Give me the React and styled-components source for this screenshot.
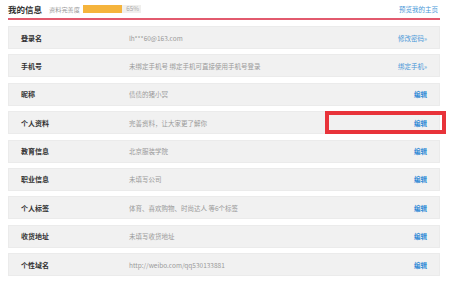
import styled, { createGlobalStyle } from "styled-components";

const GlobalStyle = createGlobalStyle`
  body {
    margin: 0;
    background: #fff;
    font-family: "Noto Sans CJK SC", "Liberation Sans", sans-serif;
  }
`;

const Page = styled.div`
  width: 432px;
  padding: 0 0 0 8px;
`;

const Header = styled.div`
  display: flex;
  align-items: center;
  height: 18px;
  border-bottom: 2px solid #e25a6e;
  margin-bottom: 6px;
`;

const Title = styled.h3`
  margin: 0;
  font-size: 8.5px;
  font-weight: bold;
  color: #333;
  line-height: 1;
`;

const ProgressLabel = styled.span`
  margin-left: 7px;
  font-size: 6.2px;
  color: #999;
`;

const Bar = styled.div`
  position: relative;
  margin-left: 3px;
  width: 58px;
  height: 8px;
  background: #f0efed;
`;

const Fill = styled.div`
  height: 100%;
  background: #f5b43c;
`;

const Percent = styled.span`
  position: absolute;
  right: 2px;
  top: 0;
  font-size: 6.3px;
  line-height: 8px;
  color: #aaa;
`;

const Preview = styled.a`
  margin-left: auto;
  margin-right: 2px;
  font-size: 6.5px;
  color: #4a98d8;
  text-decoration: none;
`;

const Row = styled.div`
  position: relative;
  display: flex;
  align-items: center;
  height: 23px;
  margin-bottom: 5.4px;
  background: #f1f1f1;
  border: 1px solid #ebebeb;
  box-sizing: border-box;
`;

const Label = styled.div`
  width: 108px;
  padding-left: 12px;
  font-size: 7px;
  font-weight: bold;
  color: #333;
`;

const Value = styled.div`
  flex: 1;
  font-size: 6.5px;
  color: #9a9a9a;
`;

const Action = styled.a`
  margin-right: 12px;
  font-size: 6.5px;
  font-weight: ${(props) => (props.bold ? "bold" : "normal")};
  color: ${(props) => (props.bold ? "#2f8ad6" : "#4a98d8")};
  text-decoration: none;
`;

const Highlight = styled.div`
  position: absolute;
  left: 316px;
  top: -1px;
  width: 121px;
  height: 23px;
  border: 4px solid #e8333a;
  box-sizing: border-box;
`;

const rows = [
  { label: "登录名", value: "lh***60@163.com", action: "修改密码»" },
  { label: "手机号", value: "未绑定手机号 绑定手机可直接使用手机号登录", action: "绑定手机»" },
  { label: "昵称", value: "债债的猪小冥", action: "编辑", bold: true },
  { label: "个人资料", value: "完善资料，让大家更了解你", action: "编辑", bold: true, mark: true },
  { label: "教育信息", value: "北京服装学院", action: "编辑", bold: true },
  { label: "职业信息", value: "未填写公司", action: "编辑", bold: true },
  { label: "个人标签", value: "体育、喜欢购物、时尚达人 等6个标签", action: "编辑", bold: true },
  { label: "收货地址", value: "未填写收货地址", action: "编辑", bold: true },
  { label: "个性域名", value: "http://weibo.com/qq530133881", action: "编辑", bold: true },
];

export default function App() {
  const progress = 65;
  const filled = 39;
  return (
    <Page>
      <GlobalStyle />
      <Header>
        <Title>我的信息</Title>
        <ProgressLabel>资料完善度</ProgressLabel>
        <Bar>
          <Fill style={{ width: `${filled}px` }} />
          <Percent>{progress}%</Percent>
        </Bar>
        <Preview href="#">预览我的主页</Preview>
      </Header>
      {rows.map((r) => (
        <Row key={r.label}>
          <Label>{r.label}</Label>
          <Value>{r.value}</Value>
          <Action href="#" bold={r.bold}>
            {r.action}
          </Action>
          {r.mark && <Highlight />}
        </Row>
      ))}
    </Page>
  );
}
